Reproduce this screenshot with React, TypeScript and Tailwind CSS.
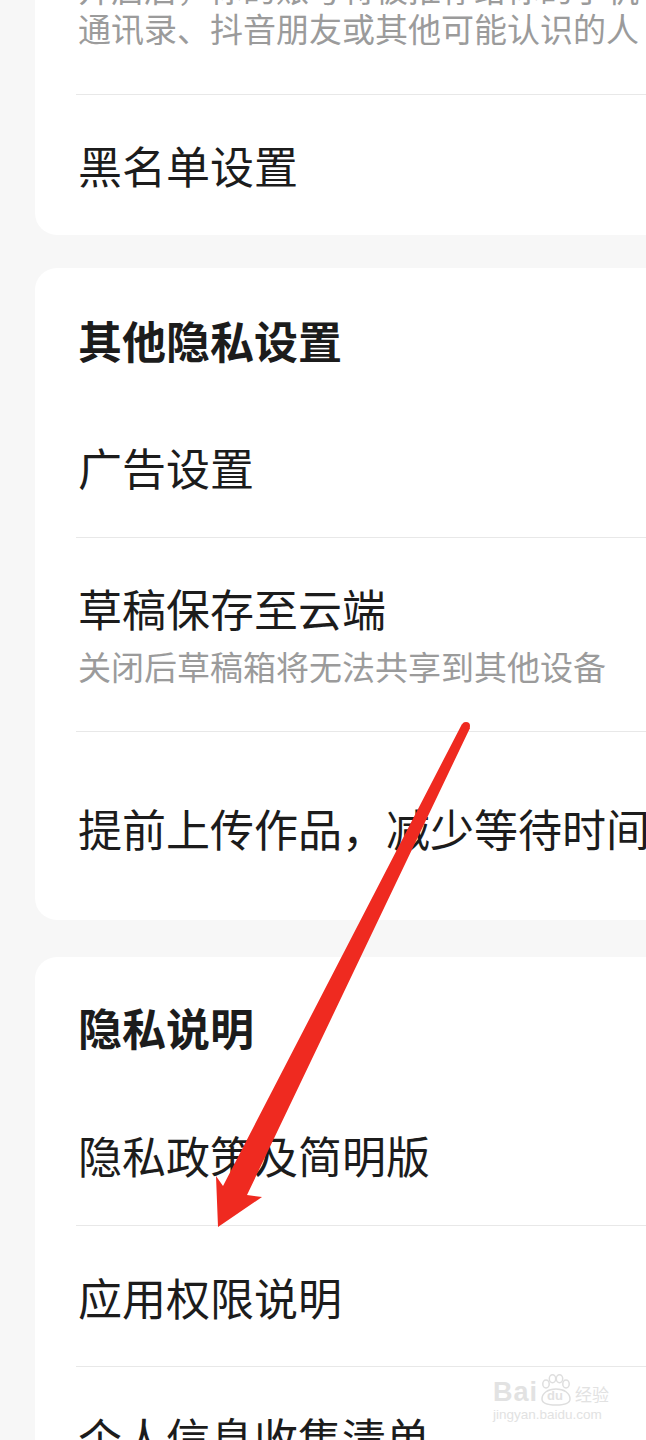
import React from "react";

const Divider = () => <div className="ml-[41px] border-t border-[#e8e8e8]" />;

const Watermark = () => (
  <div className="absolute left-[493px] top-[1374px] whitespace-nowrap select-none font-['Liberation_Sans','Noto_Sans_CJK_SC',sans-serif] text-[#e2e2e2]">
    <div className="flex items-end h-[32px]">
      <span className="text-[27px] leading-[27px] font-bold tracking-[1px]">Bai</span>
      <div className="relative w-[36px] h-[32px] shrink-0">
        <svg viewBox="0 0 36 32" className="absolute inset-0 w-[36px] h-[32px]" fill="none" stroke="#dedede" strokeWidth="1.5">
          <ellipse cx="8" cy="10" rx="3.2" ry="4" />
          <ellipse cx="14.5" cy="4.8" rx="3.2" ry="4" />
          <ellipse cx="21.5" cy="4.8" rx="3.2" ry="4" />
          <ellipse cx="28" cy="10" rx="3.2" ry="4" />
          <path d="M4 25c0-6 6-10 14-10s14 4 14 10c0 4-4 6-14 6S4 29 4 25z" />
        </svg>
        <span className="absolute left-[9px] top-[15px] text-[13px] leading-[14px] font-bold">du</span>
      </div>
      <span className="ml-[1px] text-[17px] leading-[24px] font-['Noto_Sans_CJK_SC',sans-serif]">经验</span>
    </div>
    <div className="text-[13.5px] leading-[16px] mt-[1px]">jingyan.baidu.com</div>
  </div>
);

const Arrow = () => (
  <svg className="absolute left-0 top-0 w-[646px] h-[1440px] pointer-events-none" viewBox="0 0 646 1440">
    <circle cx="466" cy="726" r="4" fill="#ef2a20" />
    <polygon
      fill="#ef2a20"
      points="462,724 223,1186 216,1176 218,1227 262,1197 247,1195 470,728"
    />
  </svg>
);

export default function App() {
  return (
    <div className="relative w-[646px] h-[1440px] overflow-hidden bg-[#f7f7f7] font-['Noto_Sans_CJK_SC',sans-serif] text-[#1c1c1c]">
      <div className="pl-[35px]">
        {/* card 1 */}
        <section className="w-[700px] -mt-[32px] bg-white rounded-l-[22px]">
          <div className="ml-[41px] pl-[2px] pb-[46px] text-[33px] leading-[40px] text-[#9b9b9b] whitespace-nowrap">
            <p>开启后，你的账号将被推荐给你的手机</p>
            <p>通讯录、抖音朋友或其他可能认识的人</p>
          </div>
          <Divider />
          <div className="ml-[41px] pl-[2px] py-[40px] text-[44px] leading-[60px]">黑名单设置</div>
        </section>

        {/* card 2 */}
        <section className="w-[700px] mt-[33px] bg-white rounded-l-[22px]">
          <div className="ml-[41px] pl-[2px] pt-[42px] pb-[27px] text-[44px] leading-[60px] font-bold">
            其他隐私设置
          </div>
          <div className="ml-[41px] pl-[2px] py-[40px] text-[44px] leading-[60px]">广告设置</div>
          <Divider />
          <div className="ml-[41px] pl-[2px] pt-[40px] pb-[45px]">
            <p className="text-[44px] leading-[60px]">草稿保存至云端</p>
            <p className="mt-[8px] text-[33px] leading-[40px] text-[#9b9b9b]">关闭后草稿箱将无法共享到其他设备</p>
          </div>
          <Divider />
          <div className="ml-[41px] pl-[2px] pt-[66px] pb-[62px] text-[44px] leading-[60px] whitespace-nowrap">
            提前上传作品，减少等待时间
          </div>
        </section>

        {/* card 3 */}
        <section className="w-[700px] mt-[37px] bg-white rounded-l-[22px]">
          <div className="ml-[41px] pl-[2px] pt-[40px] pb-[28px] text-[44px] leading-[60px] font-bold">
            隐私说明
          </div>
          <div className="ml-[41px] pl-[2px] py-[40px] text-[44px] leading-[60px]">隐私政策及简明版</div>
          <Divider />
          <div className="ml-[41px] pl-[2px] pt-[41px] pb-[39px] text-[44px] leading-[60px]">应用权限说明</div>
          <Divider />
          <div className="ml-[41px] pl-[2px] pt-[40px] pb-[40px] text-[44px] leading-[60px]">个人信息收集清单</div>
        </section>
      </div>
      <Arrow />
      <Watermark />
    </div>
  );
}
